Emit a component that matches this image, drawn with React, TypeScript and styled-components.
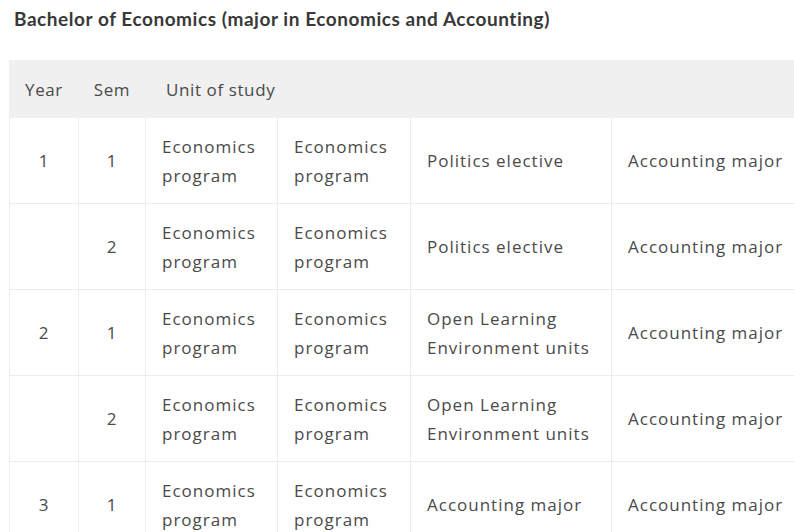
import styled, { createGlobalStyle } from "styled-components";

const GlobalStyle = createGlobalStyle`
  html, body {
    margin: 0;
    padding: 0;
    overflow: hidden;
    background: #ffffff;
  }
  body {
    font-family: "Open Sans", Lato, sans-serif;
  }
`;

const Page = styled.div`
  padding: 8px 0 0 9px;
  width: 900px;
`;

const Title = styled.h3`
  margin: 0 0 30px 5px;
  font-family: Lato, "Open Sans", sans-serif;
  font-size: 19px;
  font-weight: 700;
  line-height: 22px;
  color: #383838;
  letter-spacing: 0.55px;
`;

const Table = styled.table`
  border-collapse: collapse;
  table-layout: fixed;
  width: 803px;
  font-size: 17px;
  color: #4a4a4a;
  letter-spacing: 1px;
`;

const Col = styled.col<{ $w: number }>`
  width: ${(p) => p.$w}px;
`;

const HeadCell = styled.th<{ $center?: boolean }>`
  height: 56px;
  padding: 0 ${(p) => (p.$center ? "0" : "20px")};
  background: #eff0ef;
  font-weight: 400;
  letter-spacing: 0.6px;
  text-align: ${(p) => (p.$center ? "center" : "left")};
  border: 1px solid #eff0ef;
`;

const Row = styled.tr`
  height: 86px;
`;

const Cell = styled.td<{ $center?: boolean }>`
  padding: 0 ${(p) => (p.$center ? "0" : "16px")};
  line-height: 29px;
  text-align: ${(p) => (p.$center ? "center" : "left")};
  vertical-align: middle;
  border: 1px solid #ececec;
`;

type Plan = {
  year: string;
  sem: string;
  units: string[];
};

const widths = [69, 67, 132, 133, 201, 201];

const plans: Plan[] = [
  {
    year: "1",
    sem: "1",
    units: ["Economics program", "Economics program", "Politics elective", "Accounting major"],
  },
  {
    year: "",
    sem: "2",
    units: ["Economics program", "Economics program", "Politics elective", "Accounting major"],
  },
  {
    year: "2",
    sem: "1",
    units: [
      "Economics program",
      "Economics program",
      "Open Learning Environment units",
      "Accounting major",
    ],
  },
  {
    year: "",
    sem: "2",
    units: [
      "Economics program",
      "Economics program",
      "Open Learning Environment units",
      "Accounting major",
    ],
  },
  {
    year: "3",
    sem: "1",
    units: ["Economics program", "Economics program", "Accounting major", "Accounting major"],
  },
];

export default function App() {
  return (
    <>
      <GlobalStyle />
      <Page>
        <Title>Bachelor of Economics (major in Economics and Accounting)</Title>
        <Table>
          <colgroup>
            {widths.map((w, i) => (
              <Col key={i} $w={w} />
            ))}
          </colgroup>
          <thead>
            <tr>
              <HeadCell $center>Year</HeadCell>
              <HeadCell $center>Sem</HeadCell>
              <HeadCell colSpan={4}>Unit of study</HeadCell>
            </tr>
          </thead>
          <tbody>
            {plans.map((plan, i) => (
              <Row key={i}>
                <Cell $center>{plan.year}</Cell>
                <Cell $center>{plan.sem}</Cell>
                {plan.units.map((unit, j) => (
                  <Cell key={j}>{unit}</Cell>
                ))}
              </Row>
            ))}
          </tbody>
        </Table>
      </Page>
    </>
  );
}
